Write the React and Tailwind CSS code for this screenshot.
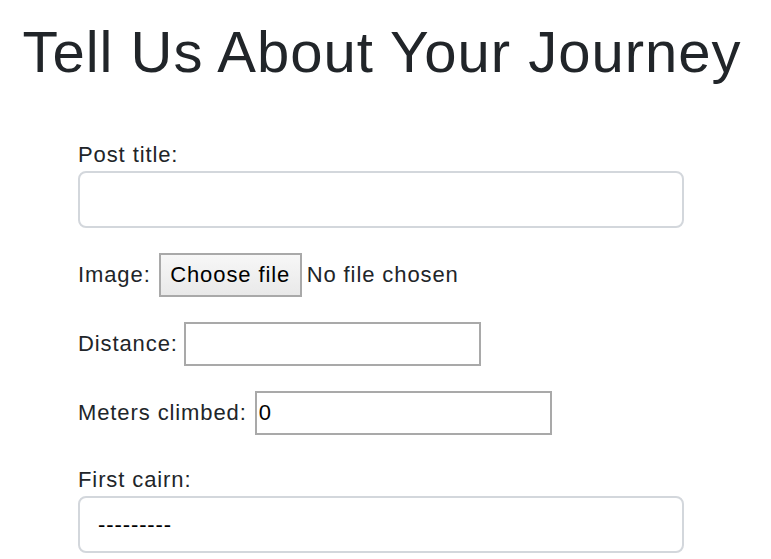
import React from "react";

const font = { fontFamily: "'Liberation Sans', Arial, sans-serif" };

function InlineField({ label, value, gap = "mr-[8px]" }) {
  return (
    <div className="flex items-center">
      <span className={gap + " leading-[1.5]"}>{label}</span>
      <input
        type="text"
        defaultValue={value}
        className="h-[44px] w-[297px] border-2 border-[#a9a9a9] bg-white px-[2px] text-[22px] tracking-[0.9px] text-black outline-none"
      />
    </div>
  );
}

export default function App() {
  return (
    <div
      className="min-h-[559px] bg-white text-[22px] tracking-[0.9px] text-[#212529]"
      style={font}
    >
      <h1 className="pr-[7px] pt-[17px] text-center text-[58px] font-normal leading-[1.2] tracking-[1px]">
        Tell Us About Your Journey
      </h1>

      <form className="ml-[78px] mt-[51px] w-[606px]">
        <label className="block leading-[1.5]">Post title:</label>
        <input
          type="text"
          className="block h-[57px] w-full rounded-[8px] border-2 border-[#d3d7dc] bg-white px-[18px] outline-none"
        />

        <div className="mt-[25px] flex items-center">
          <span className="mr-[8px] leading-[1.5]">Image:</span>
          <button
            type="button"
            className="h-[44px] w-[143px] border-2 border-[#a9a9a9] bg-gradient-to-b from-[#f7f7f7] to-[#e9e9e9] text-[22px] tracking-[0.9px] text-black"
          >
            Choose file
          </button>
          <span className="ml-[5px] leading-[1.5]">No file chosen</span>
        </div>

        <div className="mt-[25px]">
          <InlineField label="Distance:" value="" gap="mr-[6px]" />
        </div>

        <div className="mt-[25px]">
          <InlineField label="Meters climbed:" value="0" />
        </div>

        <label className="mt-[28px] block leading-[1.5]">First cairn:</label>
        <div className="flex h-[57px] w-full items-center rounded-[8px] border-2 border-[#d3d7dc] bg-white pl-[18px] text-black">
          ---------
        </div>
      </form>
    </div>
  );
}
